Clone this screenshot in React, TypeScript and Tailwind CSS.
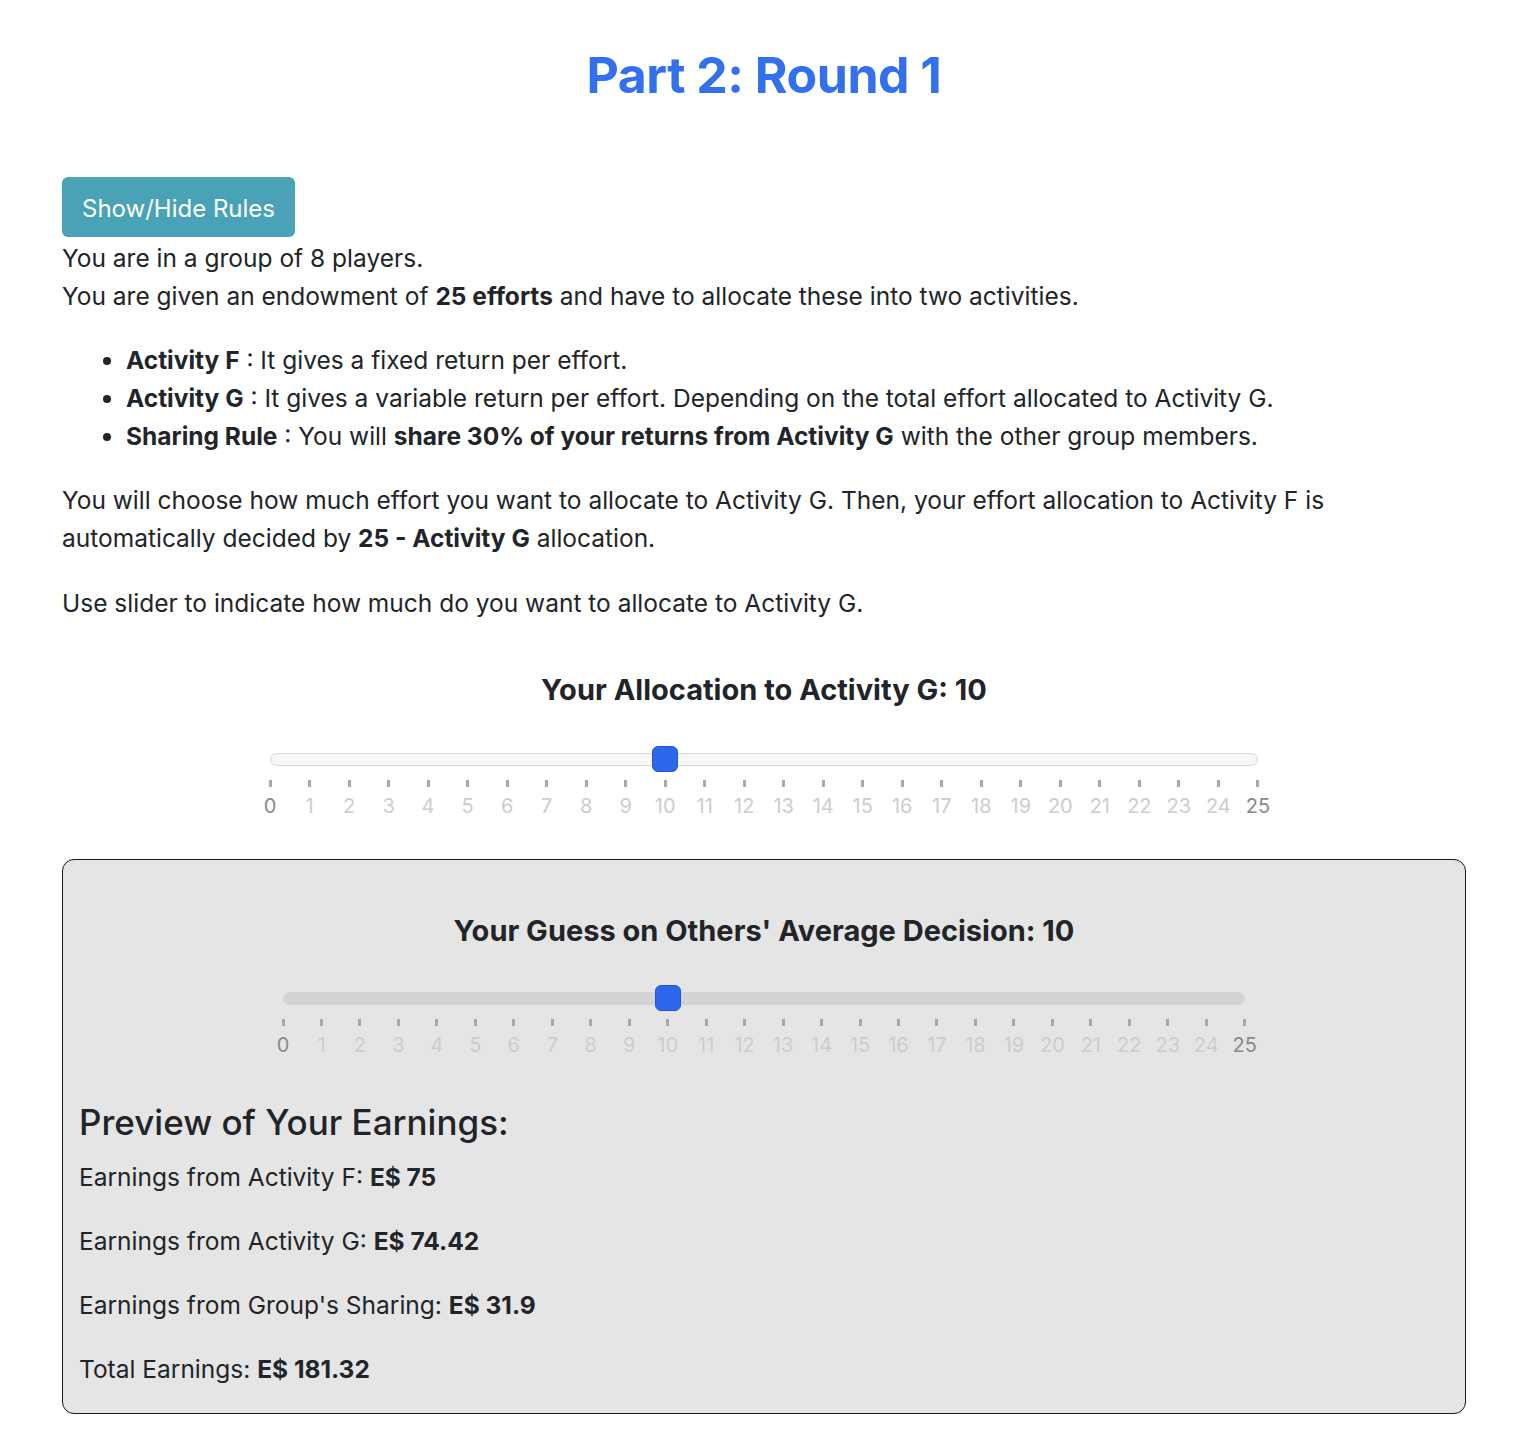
import React, { useState } from "react";

const ticks = Array.from({ length: 26 }, (_, i) => i);

interface SliderProps {
  value: number;
  setValue: (v: number) => void;
  width: number;
  track: string;
}

const Slider: React.FC<SliderProps> = ({ value, setValue, width, track }) => {
  const pct = (value / 25) * 100;

  const handleClick = (e: React.MouseEvent<HTMLDivElement>) => {
    const r = e.currentTarget.getBoundingClientRect();
    const v = Math.round(((e.clientX - r.left) / r.width) * 25);
    setValue(Math.max(0, Math.min(25, v)));
  };

  return (
    <div className="mx-auto flex flex-col" style={{ width }}>
      {/* track */}
      <div className="relative h-[26px] flex items-center cursor-pointer" onClick={handleClick}>
        <div className={`w-full h-[13px] rounded-full ${track}`} />
        <div
          className="absolute top-0 w-[26px] h-[26px] -ml-[13px] rounded-[6px] bg-[#2d67ee] border border-[#2356c9]"
          style={{ left: `${pct}%` }}
        />
      </div>
      {/* ticks */}
      <div className="flex justify-between mt-[8px]">
        {ticks.map((t) => (
          <div key={t} className="w-0 flex flex-col items-center">
            <div className="w-[3px] h-[7px] bg-[#a9a9a9]" />
            <div
              className={`text-[20px] leading-[24px] mt-[7px] ${
                t === 0 || t === 25 ? "text-[#8a8a8a]" : "text-[#cdcdcd]"
              }`}
            >
              {t}
            </div>
          </div>
        ))}
      </div>
    </div>
  );
};

export default function App() {
  const [alloc, setAlloc] = useState(10);
  const [guess, setGuess] = useState(10);
  const [showRules, setShowRules] = useState(true);

  return (
    <div
      className="min-h-screen bg-white text-[#212529] px-[62px] pb-[29px]"
      style={{ fontFamily: "Inter, 'Noto Sans', sans-serif" }}
    >
      <h1 className="text-center text-[50px] leading-[62px] font-bold text-[#3370ee] pt-[44px] tracking-[-0.5px]">
        Part 2: Round 1
      </h1>

      <button
        onClick={() => setShowRules(!showRules)}
        className="mt-[71px] h-[60px] px-[20px] pt-[3px] rounded-[6px] bg-[#4aa2b6] text-white text-[24px]"
      >
        Show/Hide Rules
      </button>

      <div className="text-[24.5px] leading-[38px] pt-[2px]">
        {showRules && (
          <>
            <p>You are in a group of 8 players.</p>
            <p>
              You are given an endowment of <b>25 efforts</b> and have to allocate these into two activities.
            </p>
            <ul className="list-disc pl-[64px] mt-[26px]">
              <li>
                <b>Activity F</b> : It gives a fixed return per effort.
              </li>
              <li>
                <b>Activity G</b> : It gives a variable return per effort. Depending on the total effort allocated
                to Activity G.
              </li>
              <li>
                <b>Sharing Rule</b> : You will <b>share 30% of your returns from Activity G</b> with the other group
                members.
              </li>
            </ul>
            <p className="mt-[26px] pr-[40px]">
              You will choose how much effort you want to allocate to Activity G. Then, your effort allocation to
              Activity F is automatically decided by <b>25 - Activity G</b> allocation.
            </p>
          </>
        )}
        <p className="mt-[27px]">Use slider to indicate how much do you want to allocate to Activity G.</p>
      </div>

      <h2 className="text-center text-[29px] leading-[34px] font-bold mt-[51px]">
        Your Allocation to Activity G: {alloc}
      </h2>
      <div className="mt-[39px]">
        <Slider value={alloc} setValue={setAlloc} width={988} track="bg-[#f7f7f7] border border-[#d9d9d9]" />
      </div>

      <div className="mt-[41px] bg-[#e5e5e5] border border-[#1a1a1a] rounded-[12px] px-[16px] pt-[54px] pb-[25px]">
        <h2 className="text-center text-[29px] leading-[34px] font-bold">
          Your Guess on Others' Average Decision: {guess}
        </h2>
        <div className="mt-[37px]">
          <Slider value={guess} setValue={setGuess} width={962} track="bg-[#d3d3d3]" />
        </div>

        <h3 className="text-[35px] leading-[44px] font-medium mt-[43px]">Preview of Your Earnings:</h3>
        <div className="text-[24.5px] leading-[38px] mt-[14px] flex flex-col gap-[26px]">
          <p>
            Earnings from Activity F: <b>E$ 75</b>
          </p>
          <p>
            Earnings from Activity G: <b>E$ 74.42</b>
          </p>
          <p>
            Earnings from Group's Sharing: <b>E$ 31.9</b>
          </p>
          <p>
            Total Earnings: <b>E$ 181.32</b>
          </p>
        </div>
      </div>
    </div>
  );
}
